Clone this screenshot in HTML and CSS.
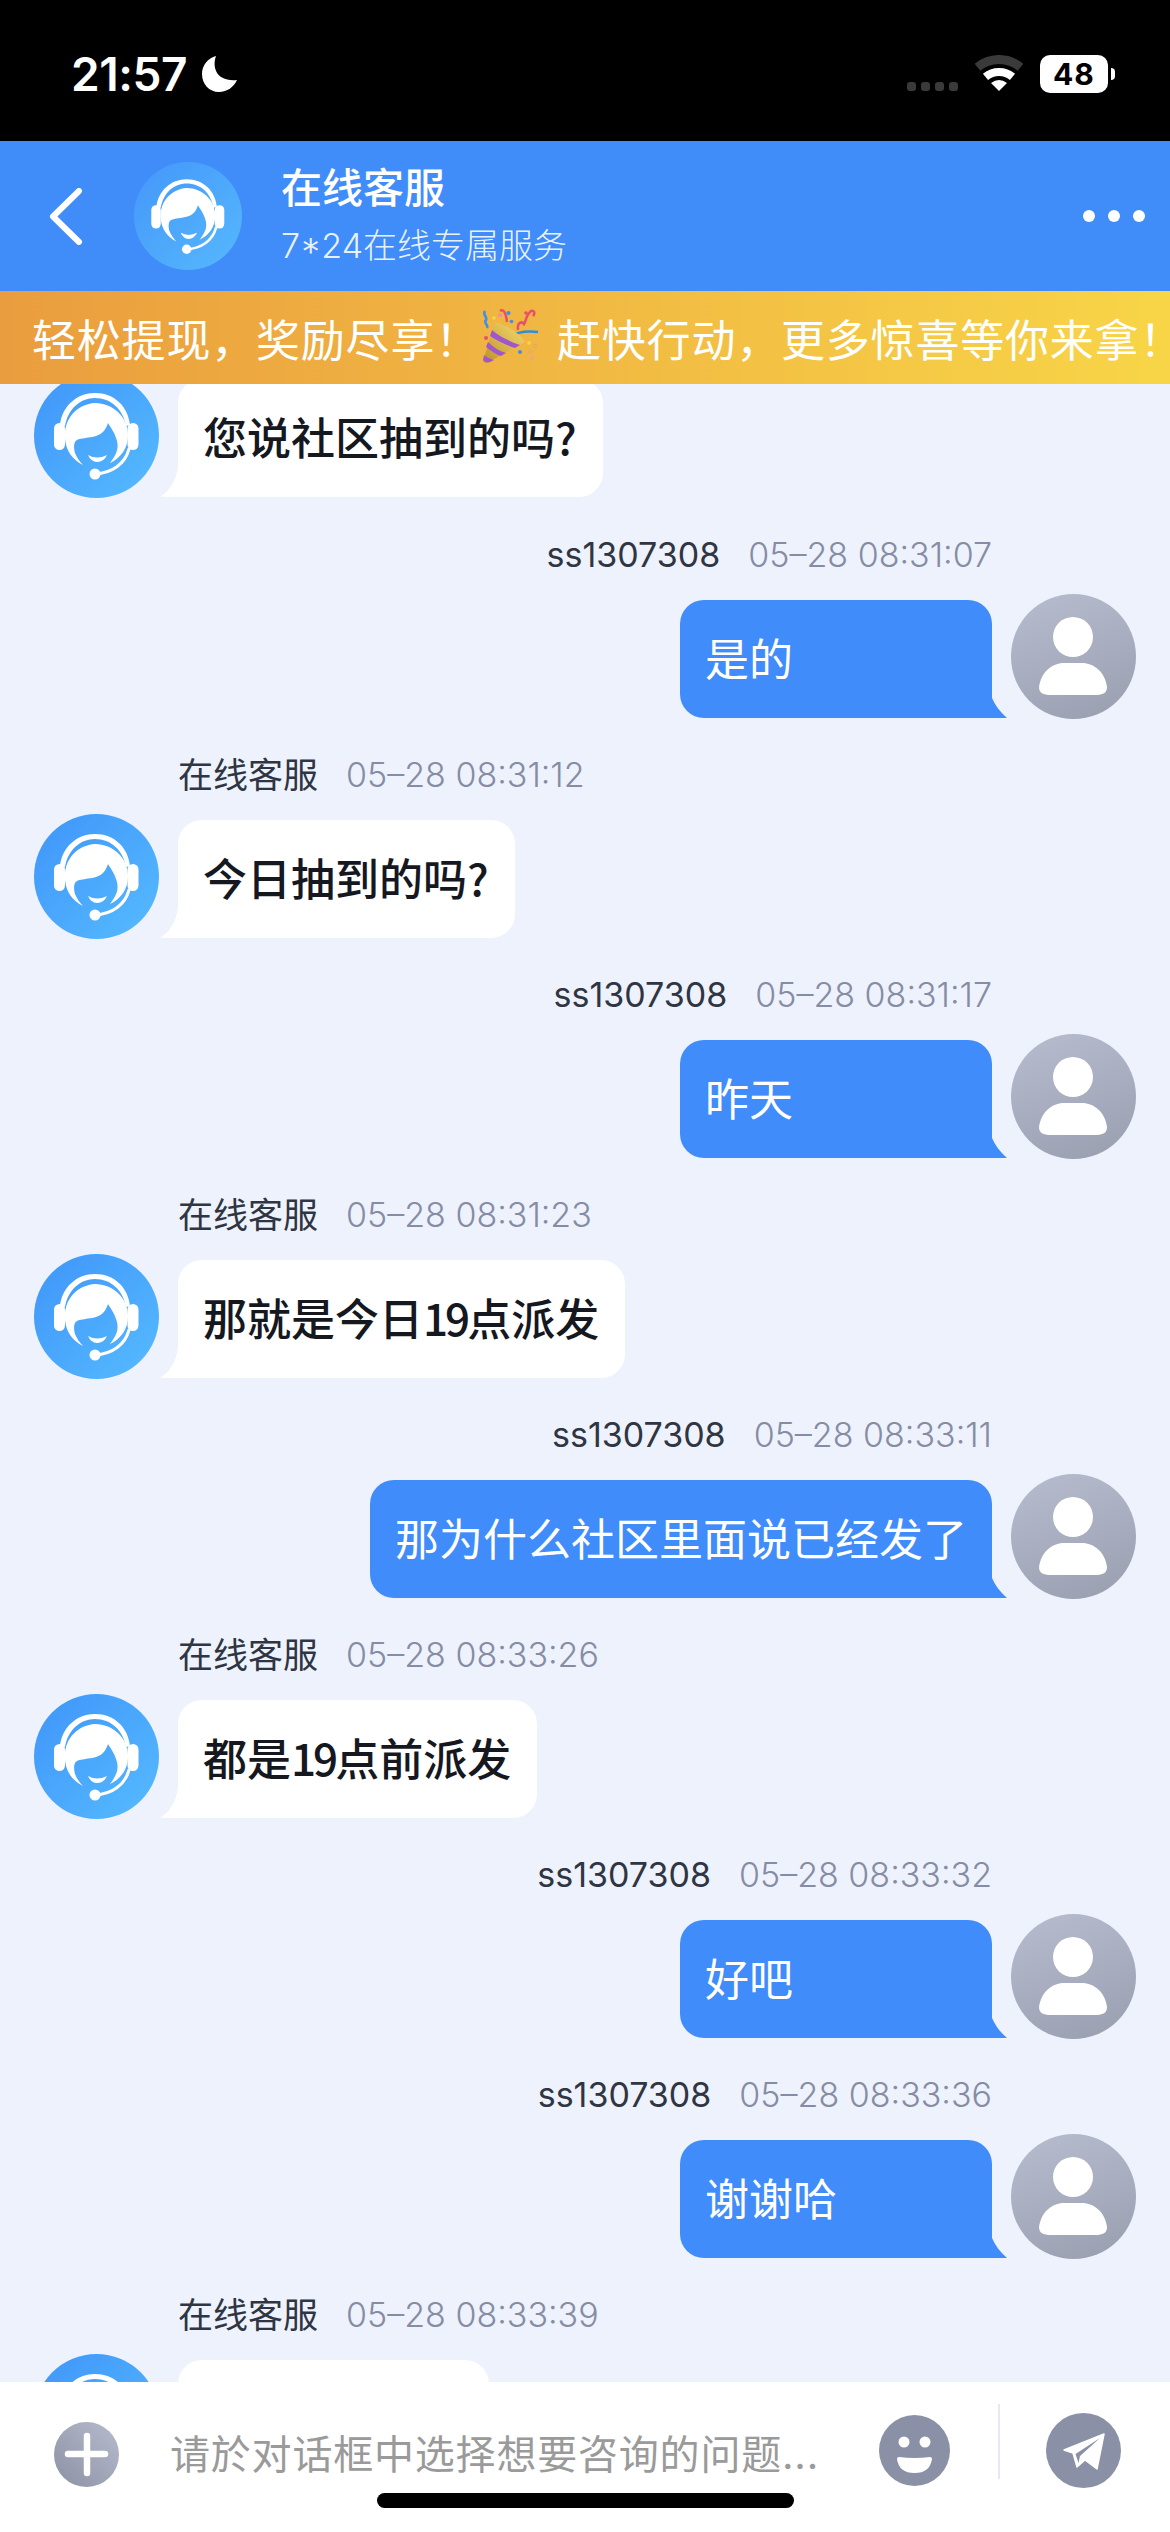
FILE: index.html
```html
<!DOCTYPE html>
<html lang="zh-CN">

<head>
    <meta charset="UTF-8">
    <title>在线客服</title>
    <link rel="stylesheet" href="styles.css">
</head>

<body>
    <svg class="defs" width="0" height="0">
        <defs>
            <symbol id="agent" viewBox="0 0 125 125">
                <path fill="#fff" d="M26 52C28 33 43 20 61 20C80 20 94 33 96 52L92 53C89 36 77 25 61 25C46 25 34 36 31 53Z" />
                <rect fill="#fff" x="20" y="50" width="11" height="27" rx="5.5" />
                <rect fill="#fff" x="93.5" y="50" width="11" height="27" rx="5.5" />
                <path fill="#fff" d="M49 92C39 87 32 78 31 66C29 45 44 31 61 30C79 30 94 44 94 62C94 75 87 85 76 90C82 82 85 76 83 68C81 60 77 55 74 50C72 56 69 61 62 63C55 65 47 65 43 67C39 69 40 76 41 80C43 85 46 89 49 92Z" />
                <path fill="#fff" d="M54 82Q63 87 73 82Q70 89 63 89Q57 89 54 82Z" />
                <path fill="none" stroke="#fff" stroke-width="3" stroke-linecap="round" d="M95 76C91 91 78 100 61 101" />
                <circle fill="#fff" cx="61" cy="101" r="5.5" />
            </symbol>
            <symbol id="user" viewBox="0 0 125 125">
                <circle fill="#fff" cx="62" cy="43" r="20" />
                <path fill="#fff" d="M28 93C30 78 41 69 53 69H71C83 69 94 78 96 93C96 99 92 101 84 101H40C32 101 28 99 28 93Z" />
            </symbol>
        </defs>
    </svg>

    <div class="page">
        <div class="status">
            <div class="status-left">
                <span class="clock">21:57</span>
                <svg class="moon" width="35" height="36" viewBox="0 0 35 36">
                    <path fill="#fff" d="M14 0C10 11 14 26 35 24C32 31 25 36 17 36C7 36 0 28 0 18C0 9 6 2 14 0Z" />
                </svg>
            </div>
            <div class="status-right">
                <div class="signal"><i></i><i></i><i></i><i></i></div>
                <svg class="wifi" width="48" height="36" viewBox="0 0 48 36">
                    <path fill="none" stroke="#3a3a3a" stroke-width="9" d="M2.5 12.3A33.5 33.5 0 0 1 45.5 12.3" />
                    <path fill="none" stroke="#fff" stroke-width="8" d="M10.5 21.9A21 21 0 0 1 37.5 21.9" />
                    <path fill="#fff" d="M24 36L16 28Q24 22 32 28Z" />
                </svg>
                <div class="battery">48</div>
                <div class="battery-cap"></div>
            </div>
        </div>

        <header class="topbar">
            <svg class="back" width="34" height="57" viewBox="0 0 34 57">
                <path fill="none" stroke="#fff" stroke-width="6" stroke-linecap="round" stroke-linejoin="round" d="M30 3L4 28.500L30 54" />
            </svg>
            <div class="top-avatar">
                <svg width="108" height="108"><use href="#agent" /></svg>
            </div>
            <div class="top-info">
                <div class="top-title">在线客服</div>
                <div class="top-sub">7*24在线专属服务</div>
            </div>
            <div class="more"><i></i><i></i><i></i></div>
        </header>

        <div class="notice">
            <span>轻松提现，奖励尽享！</span>
            <svg class="popper" width="60" height="60" viewBox="10 8 60 60">
                <defs>
                    <linearGradient id="cone" x1="1" y1="0" x2="0" y2="1">
                        <stop offset="0" stop-color="#f6dc74" />
                        <stop offset="1" stop-color="#bd9128" />
                    </linearGradient>
                </defs>
                <path fill="none" stroke="#3f8fe8" stroke-width="2.500" d="M15 11C12 15 18 17 16 20C13 23 19 25 17 28" />
                <path fill="none" stroke="#e8506a" stroke-width="2.500" d="M30 11C34 8 36 14 37 22" />
                <path fill="none" stroke="#e8506a" stroke-width="2.500" d="M48 30C47 22 52 21 54 24C56 21 56 15 61 11C65 10 65 14 63 16" />
                <path fill="none" stroke="#2f8de0" stroke-width="2.500" d="M40 37C48 31 58 31 68 32" />
                <path fill="url(#cone)" d="M25 22C34 24 50 33 55 42L19 62C15 64 12 62 14 58Z" />
                <path fill="#a157c9" d="M22 30L20 36C28 41 38 46 45 48L50 45C41 42 30 37 22 30Z" />
                <path fill="#a157c9" d="M18 42L16 47C21 51 27 55 31 56L36 53C29 51 23 47 18 42Z" />
                <path fill="#a157c9" d="M14 55L13 60C15 62 18 63 20 62L24 60C20 59 17 57 14 55Z" />
                <circle fill="#f5d648" cx="24" cy="18" r="1.800" />
                <circle fill="#ee8fa0" cx="30" cy="15" r="2" />
                <circle fill="#3f8fe8" cx="38.500" cy="13" r="2" />
                <circle fill="#3f8fe8" cx="41.500" cy="21.500" r="1.800" />
                <circle fill="#e8506a" cx="56" cy="13" r="1.800" />
                <circle fill="#e8506a" cx="16" cy="38" r="2" />
                <circle fill="#f5d648" cx="59" cy="43" r="1.800" />
                <circle fill="#3f8fe8" cx="50" cy="52" r="2" />
                <circle fill="none" stroke="#e9a66a" stroke-width="1" cx="65" cy="46" r="1.800" />
                <circle fill="none" stroke="#e9a66a" stroke-width="1" cx="60.500" cy="51.500" r="1.800" />
                <circle fill="#ee9fa0" cx="62" cy="58" r="1.800" />
            </svg>
            <span>赶快行动，更多惊喜等你来拿<span class="notice-end">！</span></span>
        </div>

        <main class="chat">
            <div class="msg msg-first">
                <div class="msg-body">
                    <div class="avatar avatar-agent"><svg width="125" height="125"><use href="#agent" /></svg></div>
                    <div class="bubble bubble-in">您说社区抽到的吗?</div>
                </div>
            </div>

            <div class="msg msg-out">
                <div class="meta"><span class="name">ss1307308</span><span class="time">05–28 08:31:07</span></div>
                <div class="msg-body">
                    <div class="bubble bubble-out">是的</div>
                    <div class="avatar avatar-user"><svg width="125" height="125"><use href="#user" /></svg></div>
                </div>
            </div>

            <div class="msg">
                <div class="meta"><span class="name">在线客服</span><span class="time">05–28 08:31:12</span></div>
                <div class="msg-body">
                    <div class="avatar avatar-agent"><svg width="125" height="125"><use href="#agent" /></svg></div>
                    <div class="bubble bubble-in">今日抽到的吗?</div>
                </div>
            </div>

            <div class="msg msg-out">
                <div class="meta"><span class="name">ss1307308</span><span class="time">05–28 08:31:17</span></div>
                <div class="msg-body">
                    <div class="bubble bubble-out">昨天</div>
                    <div class="avatar avatar-user"><svg width="125" height="125"><use href="#user" /></svg></div>
                </div>
            </div>

            <div class="msg">
                <div class="meta"><span class="name">在线客服</span><span class="time">05–28 08:31:23</span></div>
                <div class="msg-body">
                    <div class="avatar avatar-agent"><svg width="125" height="125"><use href="#agent" /></svg></div>
                    <div class="bubble bubble-in">那就是今日<span class="num">19</span>点派发</div>
                </div>
            </div>

            <div class="msg msg-out">
                <div class="meta"><span class="name">ss1307308</span><span class="time">05–28 08:33:11</span></div>
                <div class="msg-body">
                    <div class="bubble bubble-out">那为什么社区里面说已经发了</div>
                    <div class="avatar avatar-user"><svg width="125" height="125"><use href="#user" /></svg></div>
                </div>
            </div>

            <div class="msg">
                <div class="meta"><span class="name">在线客服</span><span class="time">05–28 08:33:26</span></div>
                <div class="msg-body">
                    <div class="avatar avatar-agent"><svg width="125" height="125"><use href="#agent" /></svg></div>
                    <div class="bubble bubble-in">都是<span class="num">19</span>点前派发</div>
                </div>
            </div>

            <div class="msg msg-out">
                <div class="meta"><span class="name">ss1307308</span><span class="time">05–28 08:33:32</span></div>
                <div class="msg-body">
                    <div class="bubble bubble-out">好吧</div>
                    <div class="avatar avatar-user"><svg width="125" height="125"><use href="#user" /></svg></div>
                </div>
            </div>

            <div class="msg msg-out">
                <div class="meta"><span class="name">ss1307308</span><span class="time">05–28 08:33:36</span></div>
                <div class="msg-body">
                    <div class="bubble bubble-out">谢谢哈</div>
                    <div class="avatar avatar-user"><svg width="125" height="125"><use href="#user" /></svg></div>
                </div>
            </div>

            <div class="msg">
                <div class="meta"><span class="name">在线客服</span><span class="time">05–28 08:33:39</span></div>
                <div class="msg-body">
                    <div class="avatar avatar-agent"><svg width="125" height="125"><use href="#agent" /></svg></div>
                    <div class="bubble bubble-in bubble-cut">&nbsp;</div>
                </div>
            </div>
        </main>

        <footer class="inputbar">
            <svg class="plus" width="65" height="65" viewBox="0 0 65 65">
                <defs>
                    <linearGradient id="plusbg" x1="0" y1="1" x2="1" y2="0">
                        <stop offset="0" stop-color="#8b90a4" />
                        <stop offset="1" stop-color="#b7bccd" />
                    </linearGradient>
                </defs>
                <circle fill="url(#plusbg)" cx="32.500" cy="32.500" r="32.500" />
                <path fill="none" stroke="#fff" stroke-width="6.500" stroke-linecap="round" d="M33 14V51M14 32H51" />
            </svg>
            <div class="placeholder">请於对话框中选择想要咨询的问题...</div>
            <svg class="smile" width="71" height="71" viewBox="0 0 71 71">
                <circle fill="#8a90a6" cx="35.500" cy="35.500" r="35.500" />
                <circle fill="#fff" cx="25" cy="27" r="5.500" />
                <circle fill="#fff" cx="46" cy="27" r="5.500" />
                <path fill="#fff" d="M18 44Q18 42 20 42Q35.500 44 51 42Q53 42 53 44Q51 58 35.500 58Q20 58 18 44Z" />
            </svg>
            <div class="divider"></div>
            <svg class="send" width="75" height="75" viewBox="0 0 75 75">
                <circle fill="#8a90a6" cx="37.500" cy="37.500" r="37.500" />
                <path fill="#fff" stroke="#fff" stroke-width="1.500" stroke-linejoin="round" d="M58 21L18 37L27 40L31 54L39 47L51 56Z" />
                <path fill="#8a90a6" d="M54 25L29.500 41L32.500 50L34 43Z" />
            </svg>
        </footer>

        <div class="home-bar"></div>
    </div>
</body>

</html>
```

FILE: styles.css
```css
* {
    box-sizing: border-box;
}

body {
    margin: 0;
    font-family: Inter, "Noto Sans CJK SC", sans-serif;
}

i {
    display: block;
}

.defs {
    position: absolute;
}

.page {
    position: relative;
    display: flex;
    flex-direction: column;
    width: 1170px;
    height: 2532px;
    overflow: hidden;
    background: #edf2fd;
}

/* status bar */
.status {
    display: flex;
    flex: none;
    justify-content: space-between;
    align-items: flex-start;
    height: 141px;
    padding: 55px 55px 0 71px;
    background: #000;
    color: #fff;
}

.status-left {
    display: flex;
    align-items: center;
    gap: 15px;
    height: 38px;
}

.clock {
    font-size: 46px;
    font-weight: 600;
    line-height: 38px;
    letter-spacing: -.4px;
}

.status-right {
    display: flex;
    align-items: flex-start;
}

.signal {
    display: flex;
    gap: 5px;
    margin: 27px 17px 0 0;
}

.signal i {
    width: 9px;
    height: 9px;
    border-radius: 3px;
    background: #3a3a3a;
}

.wifi {
    margin-right: 17px;
}

.battery {
    width: 68px;
    height: 38px;
    border-radius: 10px;
    background: #fff;
    color: #000;
    font-size: 30px;
    font-weight: 700;
    line-height: 38px;
    text-align: center;
    letter-spacing: 1px;
}

.battery-cap {
    width: 4px;
    height: 12px;
    margin: 13px 0 0 3px;
    border-radius: 0 6px 6px 0;
    background: #fff;
}

/* top bar */
.topbar {
    display: flex;
    flex: none;
    align-items: center;
    height: 150px;
    padding: 0 25px 0 49px;
    background: #408dfa;
    color: #fff;
}

.back {
    margin-right: 51px;
}

.top-avatar {
    display: flex;
    flex: none;
    width: 108px;
    height: 108px;
    border-radius: 50%;
    background: linear-gradient(135deg, #4497f9, #56b8fd);
}

.top-info {
    flex: 1;
    margin-left: 39px;
}

.top-title {
    font-size: 41px;
    font-weight: 500;
    line-height: 50px;
    margin-top: -2px;
}

.top-sub {
    margin-top: 12px;
    font-size: 34px;
    font-weight: 300;
    line-height: 42px;
    color: rgba(255, 255, 255, .9);
}

.more {
    display: flex;
    gap: 13px;
}

.more i {
    width: 12px;
    height: 12px;
    border-radius: 50%;
    background: #fff;
}

/* notice */
.notice {
    display: flex;
    flex: none;
    align-items: center;
    height: 93px;
    padding-left: 32px;
    background: linear-gradient(90deg, #ea9d3e, #f8d547);
    color: #fff;
    font-size: 44px;
    letter-spacing: .8px;
    white-space: nowrap;
}

.popper {
    flex: none;
    margin-right: 17px;
}

.notice-end {
    letter-spacing: -20px;
}

/* messages */
.chat {
    flex: 1;
    min-height: 0;
    overflow: hidden;
    padding: 0 34px;
}

.msg {
    margin-top: 36px;
}

.msg-first {
    margin-top: -11px;
    margin-bottom: 37px;
}

.meta {
    display: flex;
    gap: 28px;
    height: 40px;
    margin: 0 0 19px 144px;
    font-size: 35px;
    line-height: 40px;
}

.name {
    color: #2f3542;
}

.msg-out .name {
    font-size: 34px;
}

.time {
    font-size: 34px;
    font-weight: 300;
    color: #858ca4;
}

.msg-body {
    display: flex;
    align-items: flex-end;
    gap: 19px;
}

.msg-out .meta {
    justify-content: flex-end;
    margin: 0 144px 19px 0;
}

.msg-out .msg-body {
    justify-content: flex-end;
}

.avatar {
    display: flex;
    flex: none;
    width: 125px;
    height: 125px;
    border-radius: 50%;
}

.avatar-agent {
    background: linear-gradient(135deg, #3f95f9, #56bbff);
}

.avatar-user {
    background: linear-gradient(160deg, #b7bccf, #999eaf);
}

.bubble {
    position: relative;
    height: 118px;
    margin-bottom: 1px;
    padding: 0 25px;
    border-radius: 24px;
    font-family: "Noto Sans CJK SC", sans-serif;
    font-size: 44px;
    line-height: 114px;
}

.bubble-in {
    padding-right: 26px;
    border-bottom-left-radius: 0;
    background: #fff;
    color: #15181f;
    font-weight: 500;
}

.num {
    letter-spacing: -3px;
}

.bubble-in::after {
    content: "";
    position: absolute;
    left: -18px;
    bottom: 0;
    width: 18px;
    height: 30px;
    background: #fff;
    clip-path: path("M18 0C16 14 9 25 0 29.500C6 30 12 30 18 30Z");
}

.bubble-out {
    min-width: 312px;
    border-bottom-right-radius: 0;
    background: #3f8cfa;
    color: #fff;
}

.bubble-out::after {
    content: "";
    position: absolute;
    right: -15px;
    bottom: 0;
    width: 15px;
    height: 20px;
    background: #3f8cfa;
    clip-path: path("M0 0C3 7 8 14 15 20H0Z");
}

.bubble-cut {
    width: 311px;
}

/* input bar */
.inputbar {
    display: flex;
    flex: none;
    align-items: flex-start;
    height: 150px;
    padding-left: 54px;
    background: #fff;
}

.plus {
    flex: none;
    margin: 40px 51px 0 0;
}

.placeholder {
    flex: none;
    width: 709px;
    margin-top: 50px;
    font-size: 40px;
    line-height: 46px;
    letter-spacing: .8px;
    color: #9a9a9a;
    white-space: nowrap;
}

.smile {
    flex: none;
    margin-top: 33px;
}

.divider {
    flex: none;
    width: 2px;
    height: 75px;
    margin: 22px 46px 0 48px;
    background: #e6e9f1;
}

.send {
    flex: none;
    margin-top: 31px;
}

.home-bar {
    position: absolute;
    left: 377px;
    bottom: 24px;
    width: 417px;
    height: 15px;
    border-radius: 8px;
    background: #000;
}
```
